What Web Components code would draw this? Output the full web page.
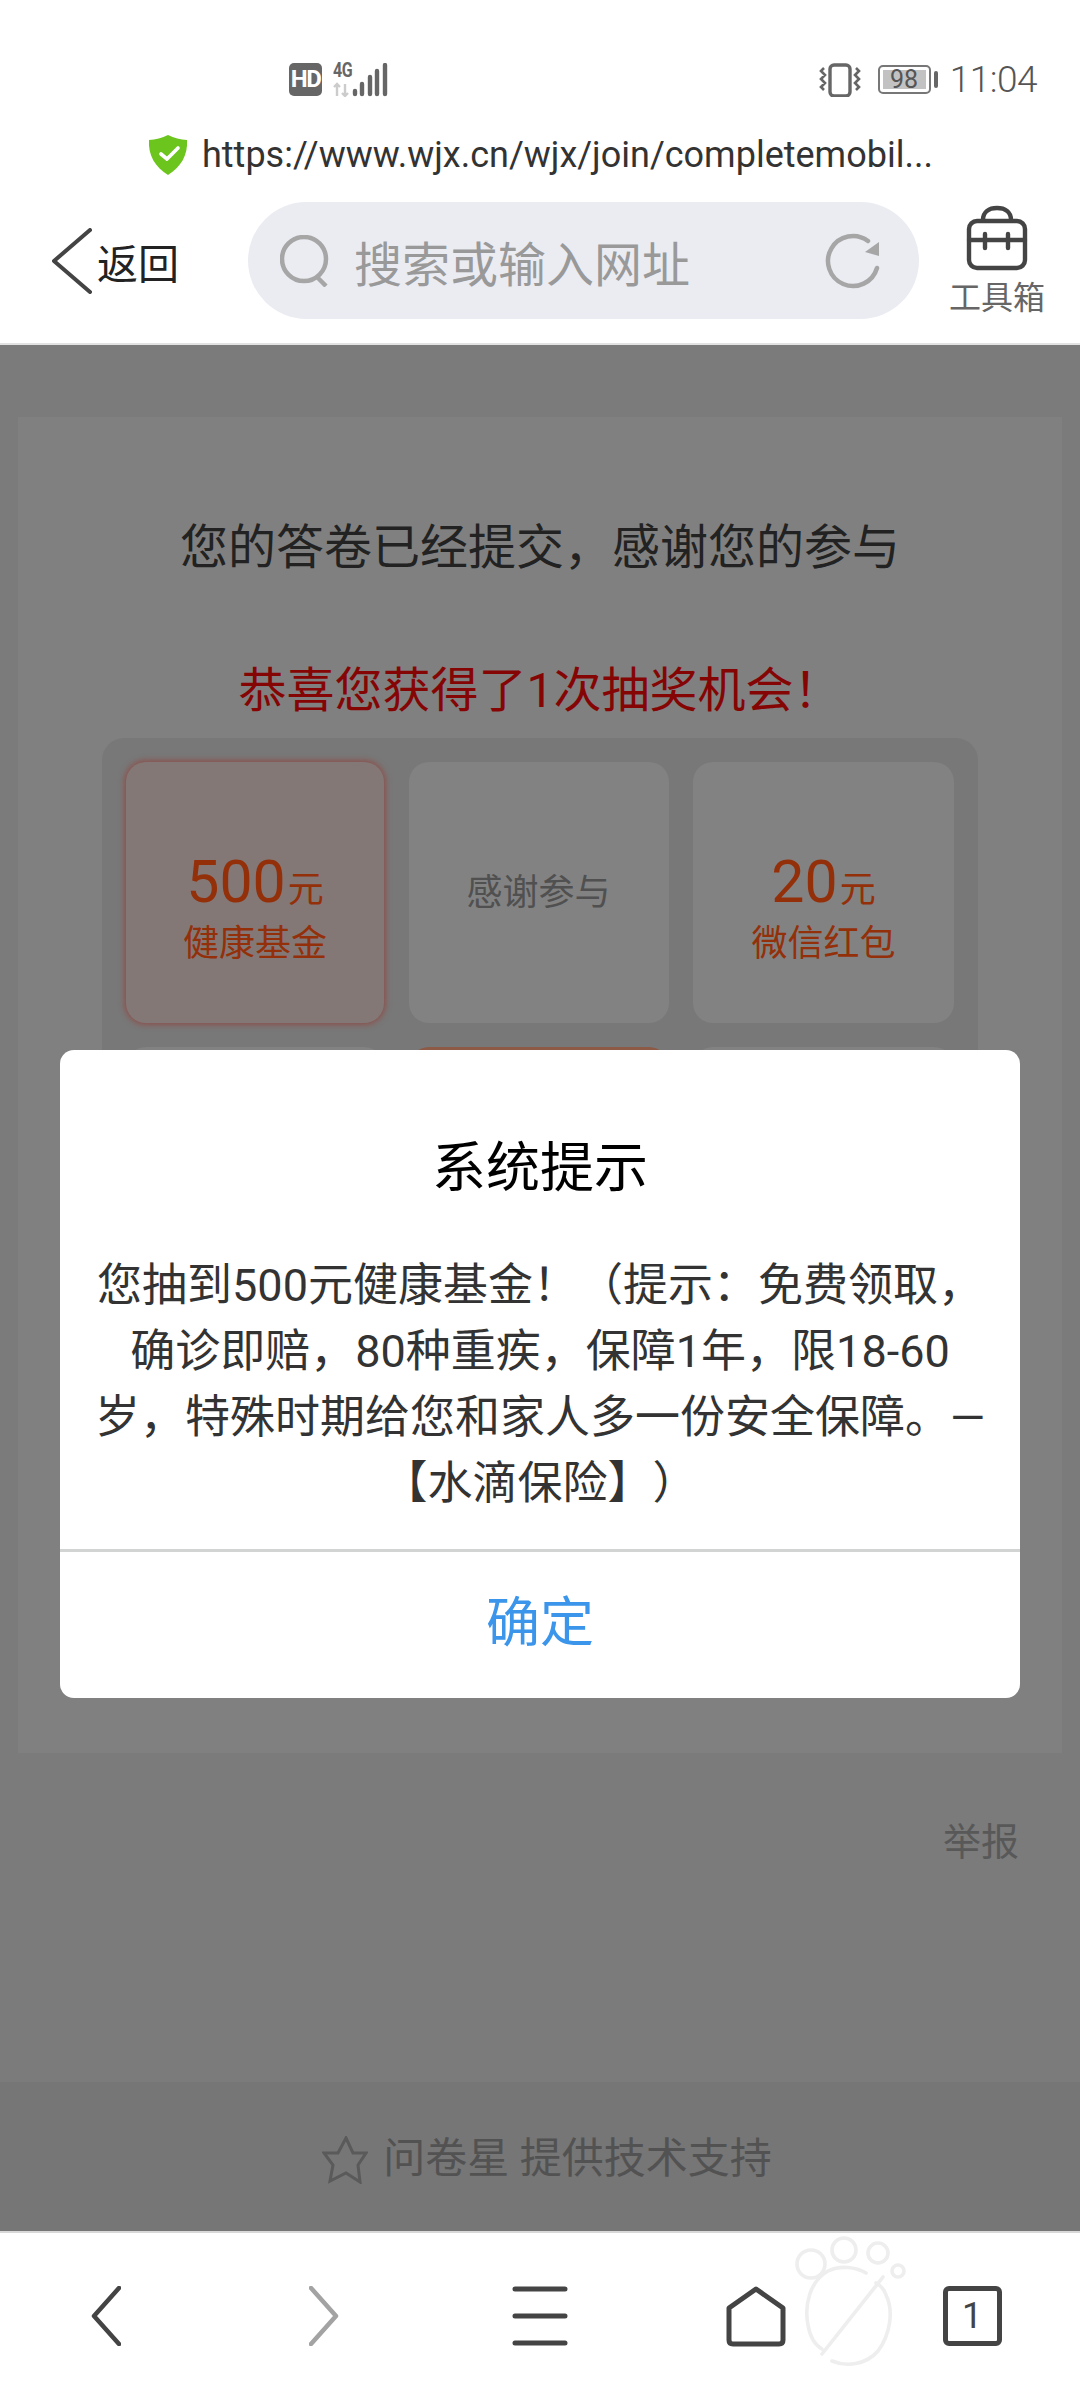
<!DOCTYPE html>
<html lang="zh">
<head>
<meta charset="utf-8">
<title>问卷星</title>
<style>
  html, body { margin: 0; padding: 0; }
  body {
    width: 1080px;
    height: 2400px;
    overflow: hidden;
    font-family: Roboto, "Noto Sans CJK SC", sans-serif;
  }
</style>
</head>
<body>
<phone-shell>
  <status-bar slot="top"></status-bar>
  <url-bar slot="top" url="https://www.wjx.cn/wjx/join/completemobil..."></url-bar>
  <browser-toolbar slot="top"></browser-toolbar>

  <survey-page>
    <span slot="thanks">您的答卷已经提交，感谢您的参与</span>
    <span slot="congrats">恭喜您获得了1次抽奖机会！</span>
    <lottery-grid slot="lottery">
      <lottery-cell active><span slot="amount">500</span><span slot="unit">元</span><span slot="label">健康基金</span></lottery-cell>
      <lottery-cell><span slot="plain">感谢参与</span></lottery-cell>
      <lottery-cell><span slot="amount">20</span><span slot="unit">元</span><span slot="label">微信红包</span></lottery-cell>
      <lottery-cell></lottery-cell>
      <lottery-cell button></lottery-cell>
      <lottery-cell></lottery-cell>
      <lottery-cell></lottery-cell>
      <lottery-cell></lottery-cell>
      <lottery-cell></lottery-cell>
    </lottery-grid>
    <span slot="report">举报</span>
    <span slot="footer">问卷星 提供技术支持</span>
  </survey-page>

  <bottom-nav slot="bottom"></bottom-nav>

  <alert-dialog slot="overlay">
    <span slot="title">系统提示</span>
    您抽到500元健康基金！（提示：免费领取，<br>确诊即赔，80种重疾，保障1年，限18-60<br>岁，特殊时期给您和家人多一份安全保障。—<br>【水滴保险】）
    <span slot="action">确定</span>
  </alert-dialog>
</phone-shell>

<script>
class PhoneShell extends HTMLElement {
  constructor() {
    super();
    this.attachShadow({ mode: 'open' });
    this.shadowRoot.innerHTML = `
      <style>
        :host {
          display: flex;
          flex-direction: column;
          position: relative;
          width: 1080px;
          height: 2400px;
          background: #fff;
          overflow: hidden;
        }
        .top { display: block; flex: none; }
        .main { display: flex; flex: 1; min-height: 0; }
      </style>
      <div class="top"><slot name="top"></slot></div>
      <div class="main"><slot></slot></div>
      <slot name="bottom"></slot>
      <slot name="overlay"></slot>
    `;
  }
}

class StatusBar extends HTMLElement {
  constructor() {
    super();
    this.attachShadow({ mode: 'open' });
    this.shadowRoot.innerHTML = `
      <style>
        :host {
          display: flex;
          justify-content: space-between;
          align-items: center;
          box-sizing: border-box;
          height: 119px;
          padding: 40px 43px 0 289px;
          color: #666;
        }
        .group { display: flex; align-items: center; }
        svg { display: block; }
        .hd {
          width: 33px;
          height: 33px;
          border-radius: 5px;
          background: #666;
          color: #fff;
          font: 700 24px/33px Roboto, sans-serif;
          letter-spacing: -1.5px;
          text-align: center;
        }
        .net { position: relative; width: 58px; height: 34px; margin-left: 11px; }
        .g {
          position: absolute;
          left: 0;
          top: -1px;
          font: 700 20px/17px Roboto, sans-serif;
          letter-spacing: -.5px;
          transform: scaleX(.8);
          transform-origin: left;
        }
        .battery {
          position: relative;
          box-sizing: border-box;
          width: 53px;
          height: 29px;
          margin-left: 16px;
          padding: 3px;
          border: 2px solid #777;
          border-radius: 5px;
        }
        .battery span {
          display: block;
          height: 100%;
          background: #c2c2c2;
          color: #555;
          font: 400 25px/19px Roboto, sans-serif;
          text-align: center;
        }
        .nub { width: 4px; height: 17px; margin-left: 3px; border-radius: 2px; background: #666; }
        .time { margin-left: 12px; font: 300 37px/40px Roboto, sans-serif; letter-spacing: -.5px; color: #555; }
      </style>
      <div class="group">
        <div class="hd">HD</div>
        <div class="net">
          <span class="g">4G</span>
          <svg width="58" height="34" viewBox="0 0 58 34">
            <path d="M4 21v12M1 24l3-3 3 3" fill="none" stroke="#ccc" stroke-width="2.4"/>
            <path d="M12 21v12M9 30l3 3 3-3" fill="none" stroke="#ccc" stroke-width="2.4"/>
            <g stroke="#666" stroke-width="4.4" stroke-linecap="round">
              <path d="M22 28v3M29 21v10M37 14v17M44 8v23M52 2v29"/>
            </g>
          </svg>
        </div>
      </div>
      <div class="group">
        <svg width="44" height="34" viewBox="0 0 44 34" fill="none" stroke="#666">
          <rect x="12" y="2" width="20" height="31" rx="4" stroke-width="3.4"/>
          <path d="M6 5l-3 3 4 4-4 4 4 4-4 4 3 3M38 5l3 3-4 4 4 4-4 4 4 4-3 3" stroke-width="2.6"/>
        </svg>
        <div class="battery"><span>98</span></div>
        <div class="nub"></div>
        <div class="time">11:04</div>
      </div>
    `;
  }
}

class UrlBar extends HTMLElement {
  constructor() {
    super();
    this.attachShadow({ mode: 'open' });
    this.shadowRoot.innerHTML = `
      <style>
        :host {
          display: flex;
          align-items: center;
          box-sizing: border-box;
          height: 72px;
          padding-left: 148px;
          gap: 14px;
          color: #333;
          font: 400 36px/72px Roboto, sans-serif;
        }
        svg { display: block; flex: none; }
      </style>
      <svg width="40" height="41" viewBox="0 0 40 41">
        <path d="M20 0Q29 4.500 39 5C40 20 33 32 20 40C7 32 0 20 1 5Q11 4.500 20 0Z" fill="#6cc51d"/>
        <path d="M13 19l6 5 11-11" fill="none" stroke="#fff" stroke-width="3.6" stroke-linecap="round" stroke-linejoin="round"/>
      </svg>
      <span></span>
    `;
    this.shadowRoot.querySelector('span').textContent = this.getAttribute('url');
  }
}

class BrowserToolbar extends HTMLElement {
  constructor() {
    super();
    this.attachShadow({ mode: 'open' });
    this.shadowRoot.innerHTML = `
      <style>
        :host {
          display: flex;
          box-sizing: border-box;
          height: 154px;
          padding: 11px 0 0 52px;
          border-bottom: 2px solid #e2e2e2;
          font-family: Roboto, "Noto Sans CJK SC", sans-serif;
        }
        svg { display: block; flex: none; }
        .back {
          display: flex;
          align-items: center;
          width: 196px;
          height: 117px;
          gap: 5px;
          color: #222;
          font-size: 41px;
        }
        .search {
          display: flex;
          align-items: center;
          box-sizing: border-box;
          width: 671px;
          height: 117px;
          padding: 0 38px 0 32px;
          border-radius: 59px;
          background: #ebecf2;
          color: #999;
          font-size: 48px;
        }
        .search span { flex: 1; margin-left: 24px; }
        .tools {
          display: flex;
          flex-direction: column;
          align-items: center;
          width: 96px;
          margin-left: 30px;
          color: #666;
          font-size: 32px;
          line-height: 40px;
        }
        .tools svg { margin: 3px 0 7px; }
      </style>
      <div class="back">
        <svg width="40" height="66" viewBox="0 0 40 66">
          <path d="M38 2L2 33L38 64" fill="none" stroke="#444" stroke-width="4" stroke-linecap="round" stroke-linejoin="round"/>
        </svg>
        <span>返回</span>
      </div>
      <div class="search">
        <svg width="50" height="52" viewBox="0 0 50 52" fill="none" stroke="#a6a6a6" stroke-width="4.5">
          <circle cx="24" cy="24" r="22"/>
          <path d="M37 42l9 9"/>
        </svg>
        <span>搜索或输入网址</span>
        <svg width="56" height="56" viewBox="0 0 56 56" fill="none">
          <path d="M43 8A25 25 0 1 0 52 35" stroke="#a6a6a6" stroke-width="4.5" stroke-linecap="round"/>
          <path d="M54 9V23L40 19z" fill="#a6a6a6"/>
        </svg>
      </div>
      <div class="tools">
        <svg width="62" height="66" viewBox="0 0 62 66" fill="none" stroke="#444" stroke-width="4.4">
          <rect x="3" y="16" width="56" height="47" rx="8"/>
          <path d="M17 15C17 7 23 3 31 3S45 7 45 15"/>
          <path d="M3 35H59M19 29V43M42 29V43" stroke-linecap="round"/>
        </svg>
        <span>工具箱</span>
      </div>
    `;
  }
}

class SurveyPage extends HTMLElement {
  constructor() {
    super();
    this.attachShadow({ mode: 'open' });
    this.shadowRoot.innerHTML = `
      <style>
        :host {
          display: flex;
          flex-direction: column;
          flex: 1;
          background: #7b7b7b;
          font-family: Roboto, "Noto Sans CJK SC", sans-serif;
        }
        .panel {
          display: flex;
          flex-direction: column;
          align-items: center;
          box-sizing: border-box;
          height: 1336px;
          margin: 72px 18px 0;
          background: #808080;
        }
        .thanks { margin-top: 101px; color: #222; font-size: 48px; line-height: 60px; }
        .congrats { margin-top: 83px; color: #850505; font-size: 48px; line-height: 60px; }
        .lottery { display: block; margin-top: 17px; }
        .report {
          margin: 64px 61px 0 0;
          color: #585858;
          font-size: 38px;
          line-height: 50px;
          text-align: right;
        }
        .footer {
          display: flex;
          justify-content: center;
          align-items: center;
          gap: 15px;
          box-sizing: border-box;
          height: 149px;
          margin-top: auto;
          padding: 0 0 5px 14px;
          background: #767676;
          color: #525252;
          font-size: 42px;
        }
        svg { display: block; margin-top: 11px; }
      </style>
      <div class="panel">
        <div class="thanks"><slot name="thanks"></slot></div>
        <div class="congrats"><slot name="congrats"></slot></div>
        <div class="lottery"><slot name="lottery"></slot></div>
      </div>
      <div class="report"><slot name="report"></slot></div>
      <div class="footer">
        <svg width="46" height="48" viewBox="0 0 46 48" fill="none" stroke="#5a5a5a" stroke-width="3">
          <path d="M24 2L31 17H44L36 29L38 46L24 37L8 45L11 29L2 17H16Z"/>
        </svg>
        <span><slot name="footer"></slot></span>
      </div>
    `;
  }
}

class LotteryGrid extends HTMLElement {
  constructor() {
    super();
    this.attachShadow({ mode: 'open' });
    this.shadowRoot.innerHTML = `
      <style>
        :host {
          display: grid;
          grid-template-columns: 258px 260px 261px;
          grid-auto-rows: 261px;
          column-gap: 24.5px;
          row-gap: 24px;
          box-sizing: border-box;
          width: 876px;
          padding: 24px;
          border-radius: 22px;
          background: #787878;
        }
      </style>
      <slot></slot>
    `;
  }
}

class LotteryCell extends HTMLElement {
  constructor() {
    super();
    this.attachShadow({ mode: 'open' });
    this.shadowRoot.innerHTML = `
      <style>
        :host {
          display: flex;
          flex-direction: column;
          align-items: center;
          justify-content: center;
          border-radius: 20px;
          background: #828282;
          color: #93300a;
        }
        :host([active]) {
          background: #847877;
          box-shadow: 0 0 6px 1px rgba(160, 40, 30, .6);
        }
        :host([button]) { background: #8c5a45; }
        .amount { height: 64px; margin-top: 33px; line-height: 64px; white-space: nowrap; }
        .amount ::slotted([slot="amount"]) { font-size: 59px; }
        .amount ::slotted([slot="unit"]) { font-size: 36px; margin-left: 2px; }
        .label { margin-top: 5px; font-size: 36px; line-height: 50px; }
        .plain { color: #505050; font-size: 36px; line-height: 50px; }
      </style>
      <div class="amount"><slot name="amount"></slot><slot name="unit"></slot></div>
      <div class="label"><slot name="label"></slot></div>
      <div class="plain"><slot name="plain"></slot></div>
    `;
    if (this.querySelector('[slot="plain"]')) {
      this.shadowRoot.querySelector('.amount').style.display = 'none';
      this.shadowRoot.querySelector('.label').style.display = 'none';
    }
  }
}

class AlertDialog extends HTMLElement {
  constructor() {
    super();
    this.attachShadow({ mode: 'open' });
    this.shadowRoot.innerHTML = `
      <style>
        :host {
          position: absolute;
          left: 60px;
          top: 1050px;
          display: flex;
          flex-direction: column;
          box-sizing: border-box;
          width: 960px;
          height: 648px;
          border-radius: 14px;
          background: #fff;
          overflow: hidden;
          font-family: Roboto, "Noto Sans CJK SC", sans-serif;
        }
        .title {
          padding-top: 88px;
          color: #000;
          font-size: 54px;
          line-height: 62px;
          text-align: center;
        }
        .body {
          margin-top: 53px;
          height: 296px;
          color: #333;
          font-size: 45px;
          line-height: 66px;
          text-align: center;
          white-space: nowrap;
          text-spacing-trim: space-all;
        }
        .action {
          display: flex;
          flex: 1;
          align-items: center;
          justify-content: center;
          padding-bottom: 14px;
          border-top: 3px solid #d2d4d4;
          color: #3b95ea;
          font-size: 54px;
        }
      </style>
      <div class="title"><slot name="title"></slot></div>
      <div class="body"><slot></slot></div>
      <div class="action"><slot name="action"></slot></div>
    `;
  }
}

class BottomNav extends HTMLElement {
  constructor() {
    super();
    this.attachShadow({ mode: 'open' });
    this.shadowRoot.innerHTML = `
      <style>
        :host {
          display: grid;
          grid-template-columns: repeat(5, 1fr);
          position: relative;
          box-sizing: border-box;
          height: 169px;
          padding-top: 53px;
          border-top: 2px solid #d8d8d8;
          background: #fff;
        }
        .item { display: flex; justify-content: center; }
        svg { display: block; }
        .tab {
          box-sizing: border-box;
          width: 59px;
          height: 60px;
          border: 5px solid #444;
          border-radius: 6px;
          color: #444;
          font: 400 36px/50px Roboto, sans-serif;
          text-align: center;
        }
        .chev { transform: translateX(-2px); }
        .paw { position: absolute; left: 790px; top: 0; }
      </style>
      <div class="item">
        <svg class="chev" width="30" height="60" viewBox="0 0 30 60" fill="none" stroke="#444" stroke-width="4.5" stroke-linecap="round" stroke-linejoin="round">
          <path d="M28 2L3 30l25 28"/>
        </svg>
      </div>
      <div class="item">
        <svg width="30" height="60" viewBox="0 0 30 60" fill="none" stroke="#a3a3a3" stroke-width="4.5" stroke-linecap="round" stroke-linejoin="round">
          <path d="M2 2l25 28L2 58"/>
        </svg>
      </div>
      <div class="item">
        <svg width="56" height="60" viewBox="0 0 56 60" stroke="#444" stroke-width="5" stroke-linecap="round">
          <path d="M3 3H53M3 30H53M3 57H53"/>
        </svg>
      </div>
      <div class="item">
        <svg width="60" height="62" viewBox="0 0 60 62" fill="none" stroke="#444" stroke-width="5" stroke-linejoin="round">
          <path d="M30 3L57 22V54Q57 58 53 58H7Q3 58 3 54V22Z"/>
        </svg>
      </div>
      <div class="item"><div class="tab">1</div></div>
      <svg class="paw" width="120" height="135" viewBox="0 0 120 135" fill="none" stroke="#eeeeee" stroke-width="3.6" stroke-linecap="round">
        <circle cx="21" cy="31" r="14"/>
        <circle cx="54" cy="17" r="12"/>
        <circle cx="88" cy="20" r="10"/>
        <circle cx="108" cy="38" r="6"/>
        <path d="M93 44L32 121"/>
        <path d="M76 40C66 34 50 32 38 38C20 48 14 72 18 92C20 104 25 112 32 116"/>
        <path d="M42 128C56 134 76 132 88 118C100 102 104 78 96 62C94 56 90 52 86 50"/>
      </svg>
    `;
  }
}

customElements.define('phone-shell', PhoneShell);
customElements.define('status-bar', StatusBar);
customElements.define('url-bar', UrlBar);
customElements.define('browser-toolbar', BrowserToolbar);
customElements.define('survey-page', SurveyPage);
customElements.define('lottery-grid', LotteryGrid);
customElements.define('lottery-cell', LotteryCell);
customElements.define('alert-dialog', AlertDialog);
customElements.define('bottom-nav', BottomNav);
</script>
</body>
</html>
